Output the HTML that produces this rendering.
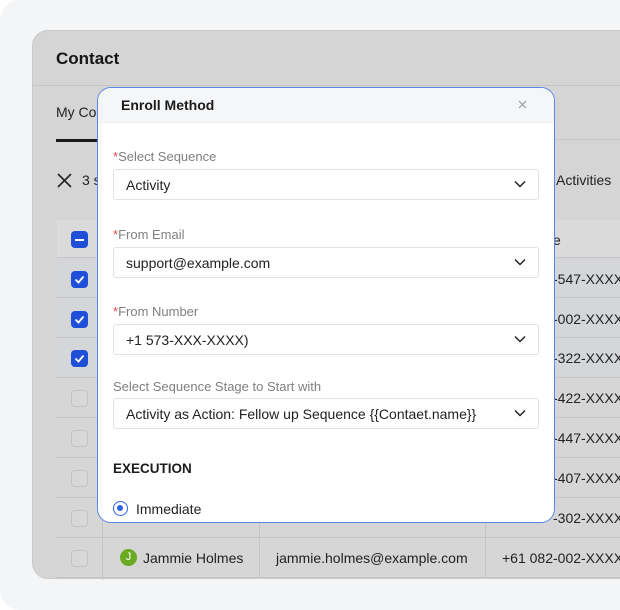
<!DOCTYPE html>
<html><head><meta charset="utf-8"><style>
*{box-sizing:border-box;margin:0;padding:0}
body{width:620px;height:610px;background:#fff;font-family:"Liberation Sans",sans-serif;position:relative;overflow:hidden;white-space:nowrap}
.outer{position:absolute;left:0;top:0;width:640px;height:610px;background:#f4f5f7;border-radius:20px}
.panel{position:absolute;left:32px;top:30px;width:620px;height:549px;background:#d5d5d5;border-radius:16px;overflow:hidden;border:1px solid #cacaca}
.abs{position:absolute}
.cb{position:absolute;left:71px;width:17px;height:17px;border-radius:4px}
.cbon{background:#1f4fd6}
.cboff{border:1.5px solid #c2c2c2;background:#d8d8d8}
.row{position:absolute;left:57px;width:600px;height:40px;border-bottom:1px solid #c5c5c5;background:#d6d6d6}
.t{font-size:14px;color:#222}
.modal{position:absolute;left:97px;top:87px;width:458px;height:436px;background:#fff;border:1.5px solid #5a86e6;border-radius:14px;overflow:hidden}
.mh{height:35px;background:#f5f6f8;border-bottom:1px solid #ececec}
.lbl{position:absolute;left:15px;font-size:13px;color:#808080}
.lbl b{color:#e04848;font-weight:normal}
.inp{position:absolute;left:15px;width:426px;height:31px;border:1px solid #e2e2e2;border-radius:3px;font-size:14px;color:#222;padding:7px 12px}
.chev{position:absolute;right:12px;top:10px;width:12px;height:8px}
</style></head><body>
<div class="outer"></div>
<div class="panel"></div>
<div class="abs" style="left:32px;top:85px;width:600px;height:1px;background:#c6c6c6"></div>
<div class="abs" style="left:56px;top:49px;font-size:17px;font-weight:bold;color:#151515">Contact</div>
<div class="abs t" style="left:56px;top:104px;font-size:14px">My Co</div>
<div class="abs" style="left:56px;top:139px;width:45px;height:3px;background:#1a1a1a"></div>
<div class="abs" style="left:550px;top:139px;width:80px;height:1px;background:#c6c6c6"></div>
<svg class="abs" style="left:57px;top:173px" width="15" height="15" viewBox="0 0 15 15"><path d="M1 1L14 14M14 1L1 14" stroke="#222" stroke-width="1.6"/></svg>
<div class="abs t" style="left:82px;top:172px">3 s</div>
<div class="abs t" style="left:556px;top:172px">Activities</div>
<div class="row" style="top:220px;height:38px;background:#dadada"></div>
<div class="abs t" style="left:553px;top:232px">e</div>
<div class="row" style="top:258px;background:#d4d6da"></div>
<div class="row" style="top:298px;background:#d4d6da"></div>
<div class="row" style="top:338px;background:#d4d6da"></div>
<div class="row" style="top:378px"></div>
<div class="row" style="top:418px"></div>
<div class="row" style="top:458px"></div>
<div class="row" style="top:498px"></div>
<div class="row" style="top:538px"></div>
<div class="abs" style="left:102px;top:220px;width:1px;height:360px;background:#c5c5c5"></div>
<div class="abs" style="left:259px;top:498px;width:1px;height:80px;background:#c5c5c5"></div>
<div class="abs" style="left:485px;top:498px;width:1px;height:80px;background:#c5c5c5"></div>
<div class="cb cbon" style="top:231px"><div style="position:absolute;left:4px;top:7.5px;width:9px;height:2px;background:#fff"></div></div>
<div class="cb cbon" style="top:271px"><svg width="17" height="17"><path d="M4.5 8.5l3 3 5-6" stroke="#fff" stroke-width="1.8" fill="none"/></svg></div>
<div class="cb cbon" style="top:311px"><svg width="17" height="17"><path d="M4.5 8.5l3 3 5-6" stroke="#fff" stroke-width="1.8" fill="none"/></svg></div>
<div class="cb cbon" style="top:350px"><svg width="17" height="17"><path d="M4.5 8.5l3 3 5-6" stroke="#fff" stroke-width="1.8" fill="none"/></svg></div>
<div class="cb cboff" style="top:390px"></div>
<div class="cb cboff" style="top:430px"></div>
<div class="cb cboff" style="top:470px"></div>
<div class="cb cboff" style="top:510px"></div>
<div class="cb cboff" style="top:550px"></div>
<div class="abs t" style="left:553px;top:271px">-547-XXXX</div>
<div class="abs t" style="left:553px;top:311px">-002-XXXX</div>
<div class="abs t" style="left:553px;top:350px">-322-XXXX</div>
<div class="abs t" style="left:553px;top:390px">-422-XXXX</div>
<div class="abs t" style="left:553px;top:430px">-447-XXXX</div>
<div class="abs t" style="left:553px;top:470px">-407-XXXX</div>
<div class="abs t" style="left:553px;top:510px">-302-XXXX</div>
<div class="abs" style="left:120px;top:549px;width:17px;height:17px;border-radius:50%;background:#6aaa22;color:#fff;font-size:11px;text-align:center;line-height:17px">J</div>
<div class="abs t" style="left:143px;top:550px">Jammie Holmes</div>
<div class="abs t" style="left:276px;top:550px">jammie.holmes@example.com</div>
<div class="abs t" style="left:502px;top:550px">+61 082-002-XXXX</div>
<div class="modal">
<div class="mh"><div class="abs" style="left:23px;top:9px;font-size:14px;font-weight:bold;color:#1b1b1b">Enroll Method</div>
<svg class="abs" style="left:420px;top:12px" width="9" height="9"><path d="M1 1L8 8M8 1L1 8" stroke="#999" stroke-width="1.2"/></svg></div>
<div class="lbl" style="top:61px"><b>*</b>Select Sequence</div>
<div class="inp" style="top:81px">Activity<svg class="chev" viewBox="0 0 12 8"><path d="M1 1.5l5 5 5-5" stroke="#222" stroke-width="1.5" fill="none"/></svg></div>
<div class="lbl" style="top:139px"><b>*</b>From Email</div>
<div class="inp" style="top:159px">support@example.com<svg class="chev" viewBox="0 0 12 8"><path d="M1 1.5l5 5 5-5" stroke="#222" stroke-width="1.5" fill="none"/></svg></div>
<div class="lbl" style="top:216px"><b>*</b>From Number</div>
<div class="inp" style="top:236px">+1 573-XXX-XXXX)<svg class="chev" viewBox="0 0 12 8"><path d="M1 1.5l5 5 5-5" stroke="#222" stroke-width="1.5" fill="none"/></svg></div>
<div class="lbl" style="top:291px">Select Sequence Stage to Start with</div>
<div class="inp" style="top:310px">Activity as Action: Fellow up Sequence {{Contaet.name}}<svg class="chev" viewBox="0 0 12 8"><path d="M1 1.5l5 5 5-5" stroke="#222" stroke-width="1.5" fill="none"/></svg></div>
<div class="abs" style="left:15px;top:373px;font-size:13.5px;font-weight:bold;color:#1b1b1b">EXECUTION</div>
<div class="abs" style="left:15px;top:413px;width:15px;height:15px;border-radius:50%;border:1.5px solid #2a62e6"><div style="position:absolute;left:3px;top:3px;width:6px;height:6px;border-radius:50%;background:#2a62e6"></div></div>
<div class="abs t" style="left:38px;top:413px">Immediate</div>
</div>
</body></html>
